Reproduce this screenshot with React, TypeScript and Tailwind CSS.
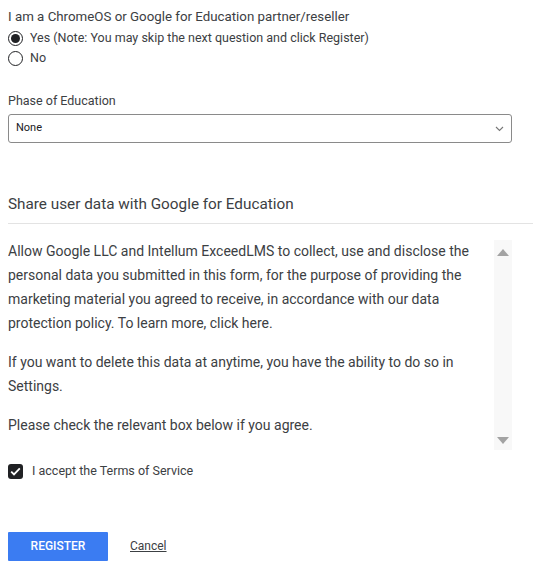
import React from "react";

export default function App() {
  return (
    <div
      className="w-[533px] h-[575px] bg-white text-[#3c4043] overflow-hidden"
      style={{ fontFamily: "Roboto, 'Liberation Sans', sans-serif" }}
    >
      <div className="pl-2">
        <div className="mt-[9px] text-[13.3px] leading-[16px]">
          I am a ChromeOS or Google for Education partner/reseller
        </div>
        <div className="mt-[3px] flex flex-col">
          <label className="flex items-center h-5 gap-[7px] text-[12.5px]">
            <span className="w-[15px] h-[15px] rounded-full border border-[#202124] flex items-center justify-center">
              <span className="w-[9px] h-[9px] rounded-full bg-[#202124]" />
            </span>
            <span>Yes (Note: You may skip the next question and click Register)</span>
          </label>
          <label className="flex items-center h-5 gap-[7px] text-[12.5px]">
            <span className="w-[15px] h-[15px] rounded-full border border-[#202124]" />
            <span>No</span>
          </label>
        </div>
        <div className="mt-[25px] text-[12.5px] leading-[16px]">Phase of Education</div>
        <div className="mt-[5px] w-[504px] h-[29px] border border-[#8a8a8a] rounded-[3px] flex items-center justify-between pl-[7px] pr-[7px]">
          <span className="text-[11px] text-[#202124]">None</span>
          <svg width="9" height="6" viewBox="0 0 9 6" fill="none">
            <path d="M1 1l3.5 3.5L8 1" stroke="#777" strokeWidth="1.1" />
          </svg>
        </div>
        <div className="mt-[51px] text-[15.3px] leading-[20px] text-[#3c4043]">
          Share user data with Google for Education
        </div>
        <div className="mt-[9px] h-px bg-[#e3e3e3]" />
        <div className="mt-[16px] w-[504px] h-[210px] flex overflow-hidden">
          <div className="flex-1 pr-2 text-[14px] leading-[24px]">
            <p className="-mt-px mb-[15px]">
              Allow Google LLC and Intellum ExceedLMS to collect, use and disclose the personal data you submitted in this form, for the purpose of providing the marketing material you agreed to receive, in accordance with our data protection policy. To learn more, click here.
            </p>
            <p className="mb-[15px]">
              If you want to delete this data at anytime, you have the ability to do so in Settings.
            </p>
            <p>Please check the relevant box below if you agree.</p>
          </div>
          <div className="w-[18px] bg-[#f8f8f8] flex flex-col items-center justify-between pt-[9px] pb-[6px]">
            <svg width="12" height="7" viewBox="0 0 12 7">
              <path d="M6 0L12 7H0z" fill="#a3a3a3" />
            </svg>
            <svg width="12" height="7" viewBox="0 0 12 7">
              <path d="M0 0h12L6 7z" fill="#a3a3a3" />
            </svg>
          </div>
        </div>
        <label className="mt-[12px] flex items-center gap-[9px]">
          <span className="w-[15px] h-[15px] rounded-[3px] bg-[#202124] flex items-center justify-center">
            <svg width="11" height="9" viewBox="0 0 11 9" fill="none">
              <path d="M1.2 4.6l2.8 2.8L9.8 1.4" stroke="white" strokeWidth="1.8" />
            </svg>
          </span>
          <span className="text-[12.5px]">I accept the Terms of Service</span>
        </label>
        <div className="mt-[51px] flex items-center gap-[22px]">
          <button className="w-[100px] h-[29px] bg-[#3b7cf2] text-white text-[12px] font-medium rounded-[1px]">
            REGISTER
          </button>
          <a className="text-[12px] underline text-[#3c4043]">Cancel</a>
        </div>
      </div>
    </div>
  );
}
